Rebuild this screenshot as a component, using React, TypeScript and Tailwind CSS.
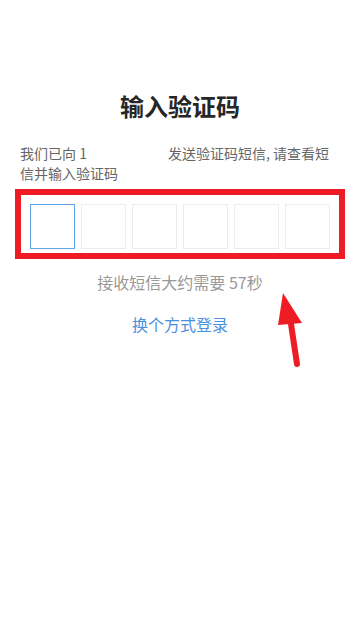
const FONT = "font-['Noto_Sans_CJK_SC','Noto_Sans',sans-serif]"

function CodeInputs() {
  const cells = [0, 1, 2, 3, 4, 5]
  return (
    <div className="flex gap-[6px]">
      {cells.map((i) => (
        <div
          key={i}
          className={
            i === 0
              ? 'w-[45px] h-[45px] border border-[#64a4ec] bg-white'
              : 'w-[45px] h-[45px] border border-[#ececec] bg-white'
          }
        />
      ))}
    </div>
  )
}

export default function App() {
  return (
    <div className={`relative w-[360px] h-[618px] bg-white overflow-hidden ${FONT}`}>
      <h1 className="pt-[88px] text-center text-[24px] leading-[36px] font-bold text-[#262626]">
        输入验证码
      </h1>

      {/* phone number is blanked out in the source */}
      <div className="mt-[19px] px-5 text-[14px] leading-[20px] text-[#666666]">
        <div className="flex">
          <span>我们已向 1</span>
          <span className="ml-[81px]">发送验证码短信, 请查看短</span>
        </div>
        <div>信并输入验证码</div>
      </div>

      <div className="mt-[6px] mx-[15px] h-[70px] border-[6px] border-[#ee1c25] pl-[9px] pt-[9px]">
        <CodeInputs />
      </div>

      <p className="mt-[11px] text-center text-[16px] leading-[24px] text-[#999999]">
        接收短信大约需要 57秒
      </p>

      <p className="mt-[18px] text-center text-[16px] leading-[24px] text-[#4a90e2]">
        换个方式登录
      </p>

      {/* annotation arrow */}
      <svg className="absolute left-[270px] top-[288px]" width="40" height="80" viewBox="0 0 40 80">
        <path d="M13 5 L8 37 L32 35 Z" fill="#ee1c25" />
        <path d="M21 36 L27 76" stroke="#ee1c25" strokeWidth="6" strokeLinecap="round" />
      </svg>
    </div>
  )
}
